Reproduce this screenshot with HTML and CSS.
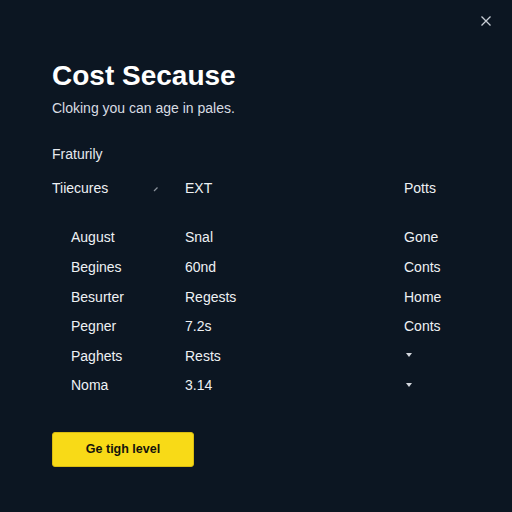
FILE: index.html
```html
<!DOCTYPE html>
<html>
<head>
<meta charset="utf-8">
<link rel="stylesheet" href="styles.css">
</head>
<body>
<div class="dialog">
  <button class="close" aria-label="Close">
    <svg width="12" height="12" viewBox="0 0 12 12"><path d="M1.5 1.5 L10.5 10.5 M10.5 1.5 L1.5 10.5" stroke="#c9ced6" stroke-width="1.3" fill="none"/></svg>
  </button>
  <h1 class="title">Cost Secause</h1>
  <p class="subtitle">Cloking you can age in pales.</p>
  <div class="label">Fraturily</div>
  <div class="table">
    <div class="thead">
      <div class="c1">Tiiecures<span class="sort"><svg width="6" height="6" viewBox="0 0 6 6"><path d="M1 5 L4.5 1.5" stroke="#8a919b" stroke-width="1.2"/></svg></span></div>
      <div class="c2">EXT</div>
      <div class="c3">Potts</div>
    </div>
    <div class="row"><div class="c1">August</div><div class="c2">Snal</div><div class="c3">Gone</div></div>
    <div class="row"><div class="c1">Begines</div><div class="c2">60nd</div><div class="c3">Conts</div></div>
    <div class="row"><div class="c1">Besurter</div><div class="c2">Regests</div><div class="c3">Home</div></div>
    <div class="row"><div class="c1">Pegner</div><div class="c2">7.2s</div><div class="c3">Conts</div></div>
    <div class="row"><div class="c1">Paghets</div><div class="c2">Rests</div><div class="c3"><span class="caret"></span></div></div>
    <div class="row"><div class="c1">Noma</div><div class="c2">3.14</div><div class="c3"><span class="caret"></span></div></div>
  </div>
  <button class="cta">Ge tigh level</button>
</div>
</body>
</html>
```
FILE: styles.css
```css
* { box-sizing: border-box; }
html, body { margin: 0; padding: 0; }
body {
  width: 512px;
  height: 512px;
  background: #0c1622;
  font-family: "Liberation Sans", Arial, sans-serif;
  color: #eef1f4;
  overflow: hidden;
}
.dialog {
  position: relative;
  width: 512px;
  height: 512px;
  padding: 60px 0 0 52px;
  display: flex;
  flex-direction: column;
  align-items: flex-start;
}
.close {
  position: absolute;
  top: 15px;
  left: 480px;
  width: 12px;
  height: 12px;
  padding: 0;
  border: 0;
  background: none;
  display: flex;
}
.title {
  margin: 0;
  font-size: 28px;
  line-height: 32px;
  font-weight: 700;
  color: #ffffff;
}
.subtitle {
  margin: 6px 0 0;
  font-size: 14px;
  line-height: 20px;
  color: #d8dce2;
}
.label {
  margin-top: 26px;
  font-size: 14px;
  line-height: 20px;
  color: #e6e9ee;
}
.table {
  margin-top: 14px;
  display: flex;
  flex-direction: column;
  font-size: 14px;
}
.thead {
  display: grid;
  grid-template-columns: 133px 219px 80px;
  line-height: 20px;
  color: #eef1f4;
  margin-bottom: 25.4px;
}
.thead .c1 { display: flex; align-items: center; }
.sort { margin-left: 45px; display: flex; margin-top: 2px; }
.row {
  display: grid;
  grid-template-columns: 114px 219px 80px;
  padding-left: 19px;
  height: 29.6px;
  line-height: 29.6px;
  color: #eef1f4;
}
.c3 { display: flex; align-items: center; }
.caret {
  display: inline-block;
  width: 0;
  height: 0;
  margin-left: 2px;
  margin-top: -3px;
  border-left: 3px solid transparent;
  border-right: 3px solid transparent;
  border-top: 4px solid #d4d8de;
}
.cta {
  margin-top: 31px;
  width: 142px;
  height: 35px;
  background: #f8da17;
  border: 1px solid #d9bc10;
  border-radius: 3px;
  font-family: "Liberation Sans", Arial, sans-serif;
  font-weight: 700;
  font-size: 12.5px;
  color: #15140c;
  padding: 0;
}
```
